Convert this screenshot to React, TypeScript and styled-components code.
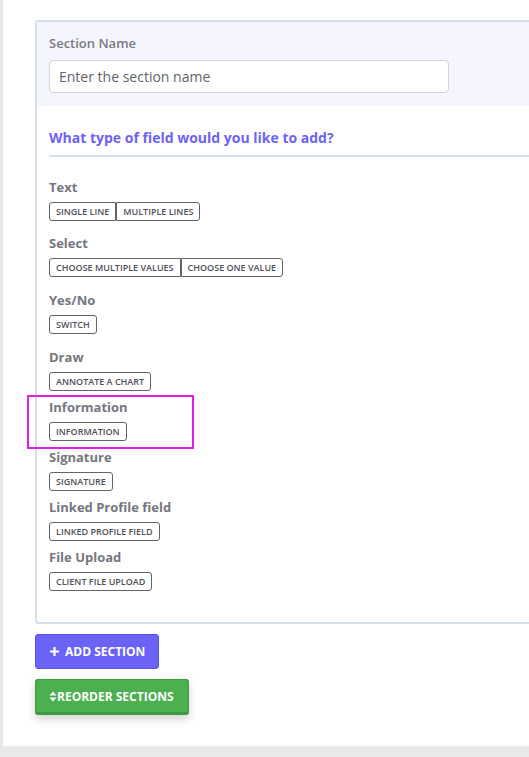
import React from "react";
import styled, { createGlobalStyle } from "styled-components";

const Global = createGlobalStyle`
  html, body { margin: 0; padding: 0; background: #e9e9e9; }
  body { font-family: "Open Sans", "Noto Sans", sans-serif; overflow: hidden; }
  * { box-sizing: border-box; }
`;

const Page = styled.div`
  width: 529px;
  height: 757px;
  background: #e9e9e9;
  padding-left: 3px;
  overflow: hidden;
`;

const Panel = styled.div`
  background: #ffffff;
  height: 746px;
  padding: 20px 0 31px 32px;
  overflow: hidden;
`;

const Card = styled.div`
  width: 620px;
  border: 2px solid #d6dfeb;
  border-radius: 4px;
  background: #fff;
  padding-bottom: 31px;
`;

const Top = styled.div`
  background: #f5f5fe;
  padding: 12px 12px 13px;
  display: flex;
  flex-direction: column;
  gap: 8px;
`;

const FieldLabel = styled.label`
  font-size: 13px;
  font-weight: 600;
  color: #7a7a82;
  line-height: 18px;
`;

const Input = styled.input`
  width: 400px;
  height: 33px;
  border: 1px solid #d3d3db;
  border-radius: 4px;
  padding: 0 9px;
  font-family: inherit;
  font-size: 14px;
  color: #555;
  background: #fff;
  &::placeholder { color: #63636b; }
`;

const Body = styled.div`
  padding: 22px 0 0 12px;
`;

const Heading = styled.h3`
  margin: 0;
  font-size: 14px;
  font-weight: 700;
  color: #6c62f5;
  line-height: 20px;
  padding-bottom: 7px;
  border-bottom: 2px solid #d6dfeb;
`;

const Groups = styled.div`
  margin-top: 21px;
  display: flex;
  flex-direction: column;
`;

const Group = styled.div<{ $gap: number }>`
  position: relative;
  display: flex;
  flex-direction: column;
  align-items: flex-start;
  gap: 6px;
  margin-bottom: ${(p) => p.$gap}px;
`;

const GroupLabel = styled.div`
  font-size: 13px;
  font-weight: 700;
  color: #76767e;
  line-height: 18px;
`;

const ButtonRow = styled.div`
  display: flex;
`;

const TypeButton = styled.button`
  height: 19px;
  padding: 0 6px;
  border: 1px solid #63636b;
  background: #fff;
  font-family: inherit;
  font-size: 9px;
  font-weight: 600;
  letter-spacing: 0;
  color: #50505a;
  text-transform: uppercase;
  border-radius: 0;
  &:first-child { border-top-left-radius: 3px; border-bottom-left-radius: 3px; }
  &:last-child { border-top-right-radius: 3px; border-bottom-right-radius: 3px; }
`;

const Highlight = styled.div`
  position: absolute;
  left: -22px;
  top: -3px;
  width: 167px;
  height: 54px;
  border: 2px solid #e01ee6;
  pointer-events: none;
`;

const Actions = styled.div`
  display: flex;
  flex-direction: column;
  align-items: flex-start;
  gap: 10px;
  margin-top: 10px;
`;

const ActionButton = styled.button<{ $color: string; $dark: string; $shadow?: boolean }>`
  display: flex;
  align-items: center;
  gap: 5px;
  height: ${(p) => (p.$shadow ? 36 : 35)}px;
  padding: 0 ${(p) => (p.$shadow ? 14 : 13)}px 0 13px;
  border: 1px solid ${(p) => p.$dark};
  border-bottom-width: ${(p) => (p.$shadow ? 3 : 1)}px;
  border-radius: 3px;
  background: ${(p) => p.$color};
  color: #fff;
  font-family: inherit;
  font-size: 12px;
  font-weight: 700;
  text-transform: uppercase;
  box-shadow: ${(p) => (p.$shadow ? "0 4px 10px rgba(0,0,0,0.18)" : "none")};
`;

const groups: { label: string; buttons: string[]; gap: number; hl?: boolean }[] = [
  { label: "Text", buttons: ["Single Line", "Multiple Lines"], gap: 13 },
  { label: "Select", buttons: ["Choose multiple values", "Choose one value"], gap: 14 },
  { label: "Yes/No", buttons: ["Switch"], gap: 14 },
  { label: "Draw", buttons: ["Annotate a chart"], gap: 7 },
  { label: "Information", buttons: ["Information"], gap: 7, hl: true },
  { label: "Signature", buttons: ["Signature"], gap: 7 },
  { label: "Linked Profile field", buttons: ["Linked Profile field"], gap: 7 },
  { label: "File Upload", buttons: ["Client file upload"], gap: 0 },
];

export default function App() {
  return (
    <>
      <Global />
      <Page>
        <Panel>
          <Card>
            <Top>
              <FieldLabel>Section Name</FieldLabel>
              <Input placeholder="Enter the section name" />
            </Top>
            <Body>
              <Heading>What type of field would you like to add?</Heading>
              <Groups>
                {groups.map((g) => (
                  <Group key={g.label} $gap={g.gap}>
                    {g.hl && <Highlight />}
                    <GroupLabel>{g.label}</GroupLabel>
                    <ButtonRow>
                      {g.buttons.map((b) => (
                        <TypeButton key={b}>{b}</TypeButton>
                      ))}
                    </ButtonRow>
                  </Group>
                ))}
              </Groups>
            </Body>
          </Card>
          <Actions>
            <ActionButton $color="#6a63f6" $dark="#5a53e0">
              <svg width="11" height="11" viewBox="0 0 12 12">
                <path d="M6 1v10M1 6h10" stroke="#fff" strokeWidth="2.4" />
              </svg>
              Add Section
            </ActionButton>
            <ActionButton $color="#4caf50" $dark="#3f9a43" $shadow>
              <svg width="8" height="11" viewBox="0 0 8 11" style={{ marginRight: -5 }}>
                <path d="M4 0.5L7.5 4.5H0.5Z M4 10.5L7.5 6.5H0.5Z" fill="#fff" />
              </svg>
              Reorder Sections
            </ActionButton>
          </Actions>
        </Panel>
      </Page>
    </>
  );
}
